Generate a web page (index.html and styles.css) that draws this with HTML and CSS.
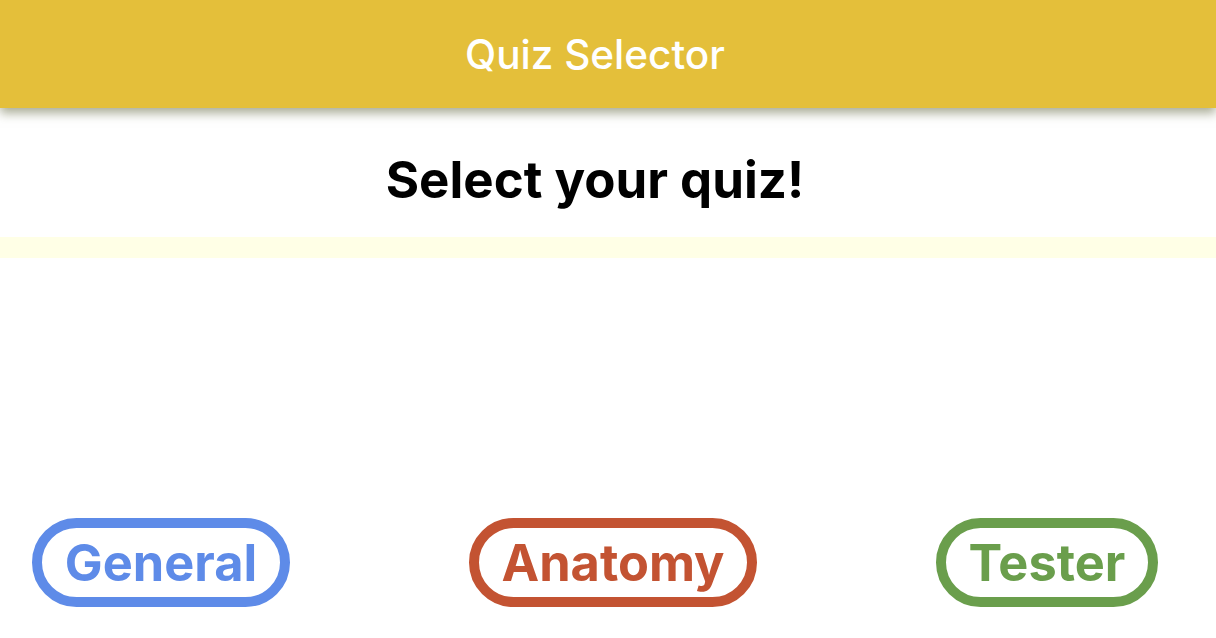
FILE: index.html
```html
<!DOCTYPE html>
<html>
<head>
<meta charset="utf-8">
<link rel="stylesheet" href="styles.css">
</head>
<body>
<div class="page">
  <header class="topbar"><h1 class="topbar-title">Quiz Selector</h1></header>
  <main class="content">
    <h2 class="prompt">Select your quiz!</h2>
    <div class="strip"></div>
    <div class="spacer"></div>
    <div class="choices">
      <button class="choice choice-general">General</button>
      <button class="choice choice-anatomy">Anatomy</button>
      <button class="choice choice-tester">Tester</button>
    </div>
  </main>
</div>
</body>
</html>
```
FILE: styles.css
```css
* { box-sizing: border-box; }
html, body { margin: 0; padding: 0; background: #fff; }
body { font-family: Inter, "Noto Sans", sans-serif; width: 1216px; height: 638px; overflow: hidden; }
.topbar {
  height: 108px;
  background: #e4bf3a;
  display: flex;
  align-items: center;
  justify-content: center;
  padding-right: 26px;
  box-shadow: 0 5px 10px rgba(80, 85, 40, 0.5);
  position: relative;
  z-index: 1;
}
.topbar-title { margin: 0; color: #fff; font-size: 40.5px; font-weight: 500; }
.content { display: flex; flex-direction: column; }
.prompt {
  margin: 0;
  height: 129px;
  padding: 13px 26px 0 0;
  display: flex;
  align-items: center;
  justify-content: center;
  font-size: 51px;
  font-weight: 700;
  color: #000;
}
.strip { height: 21px; background: #ffffe6; }
.spacer { height: 260px; }
.choices {
  width: 1190px;
  display: flex;
  justify-content: space-between;
  padding: 0 32px;
}
.choice {
  height: 89px;
  border: 10px solid;
  border-radius: 45px;
  background: #fff;
  font-family: Inter, "Noto Sans", sans-serif;
  font-size: 50.5px;
  font-weight: 700;
  padding: 0 20px;
  display: flex;
  align-items: center;
  justify-content: center;
}
.choice-general { color: #5e8be8; border-color: #5e8be8; width: 258px; }
.choice-anatomy { color: #c35332; border-color: #c35332; width: 288px; }
.choice-tester { color: #6a9e4c; border-color: #6a9e4c; width: 222px; }
```
